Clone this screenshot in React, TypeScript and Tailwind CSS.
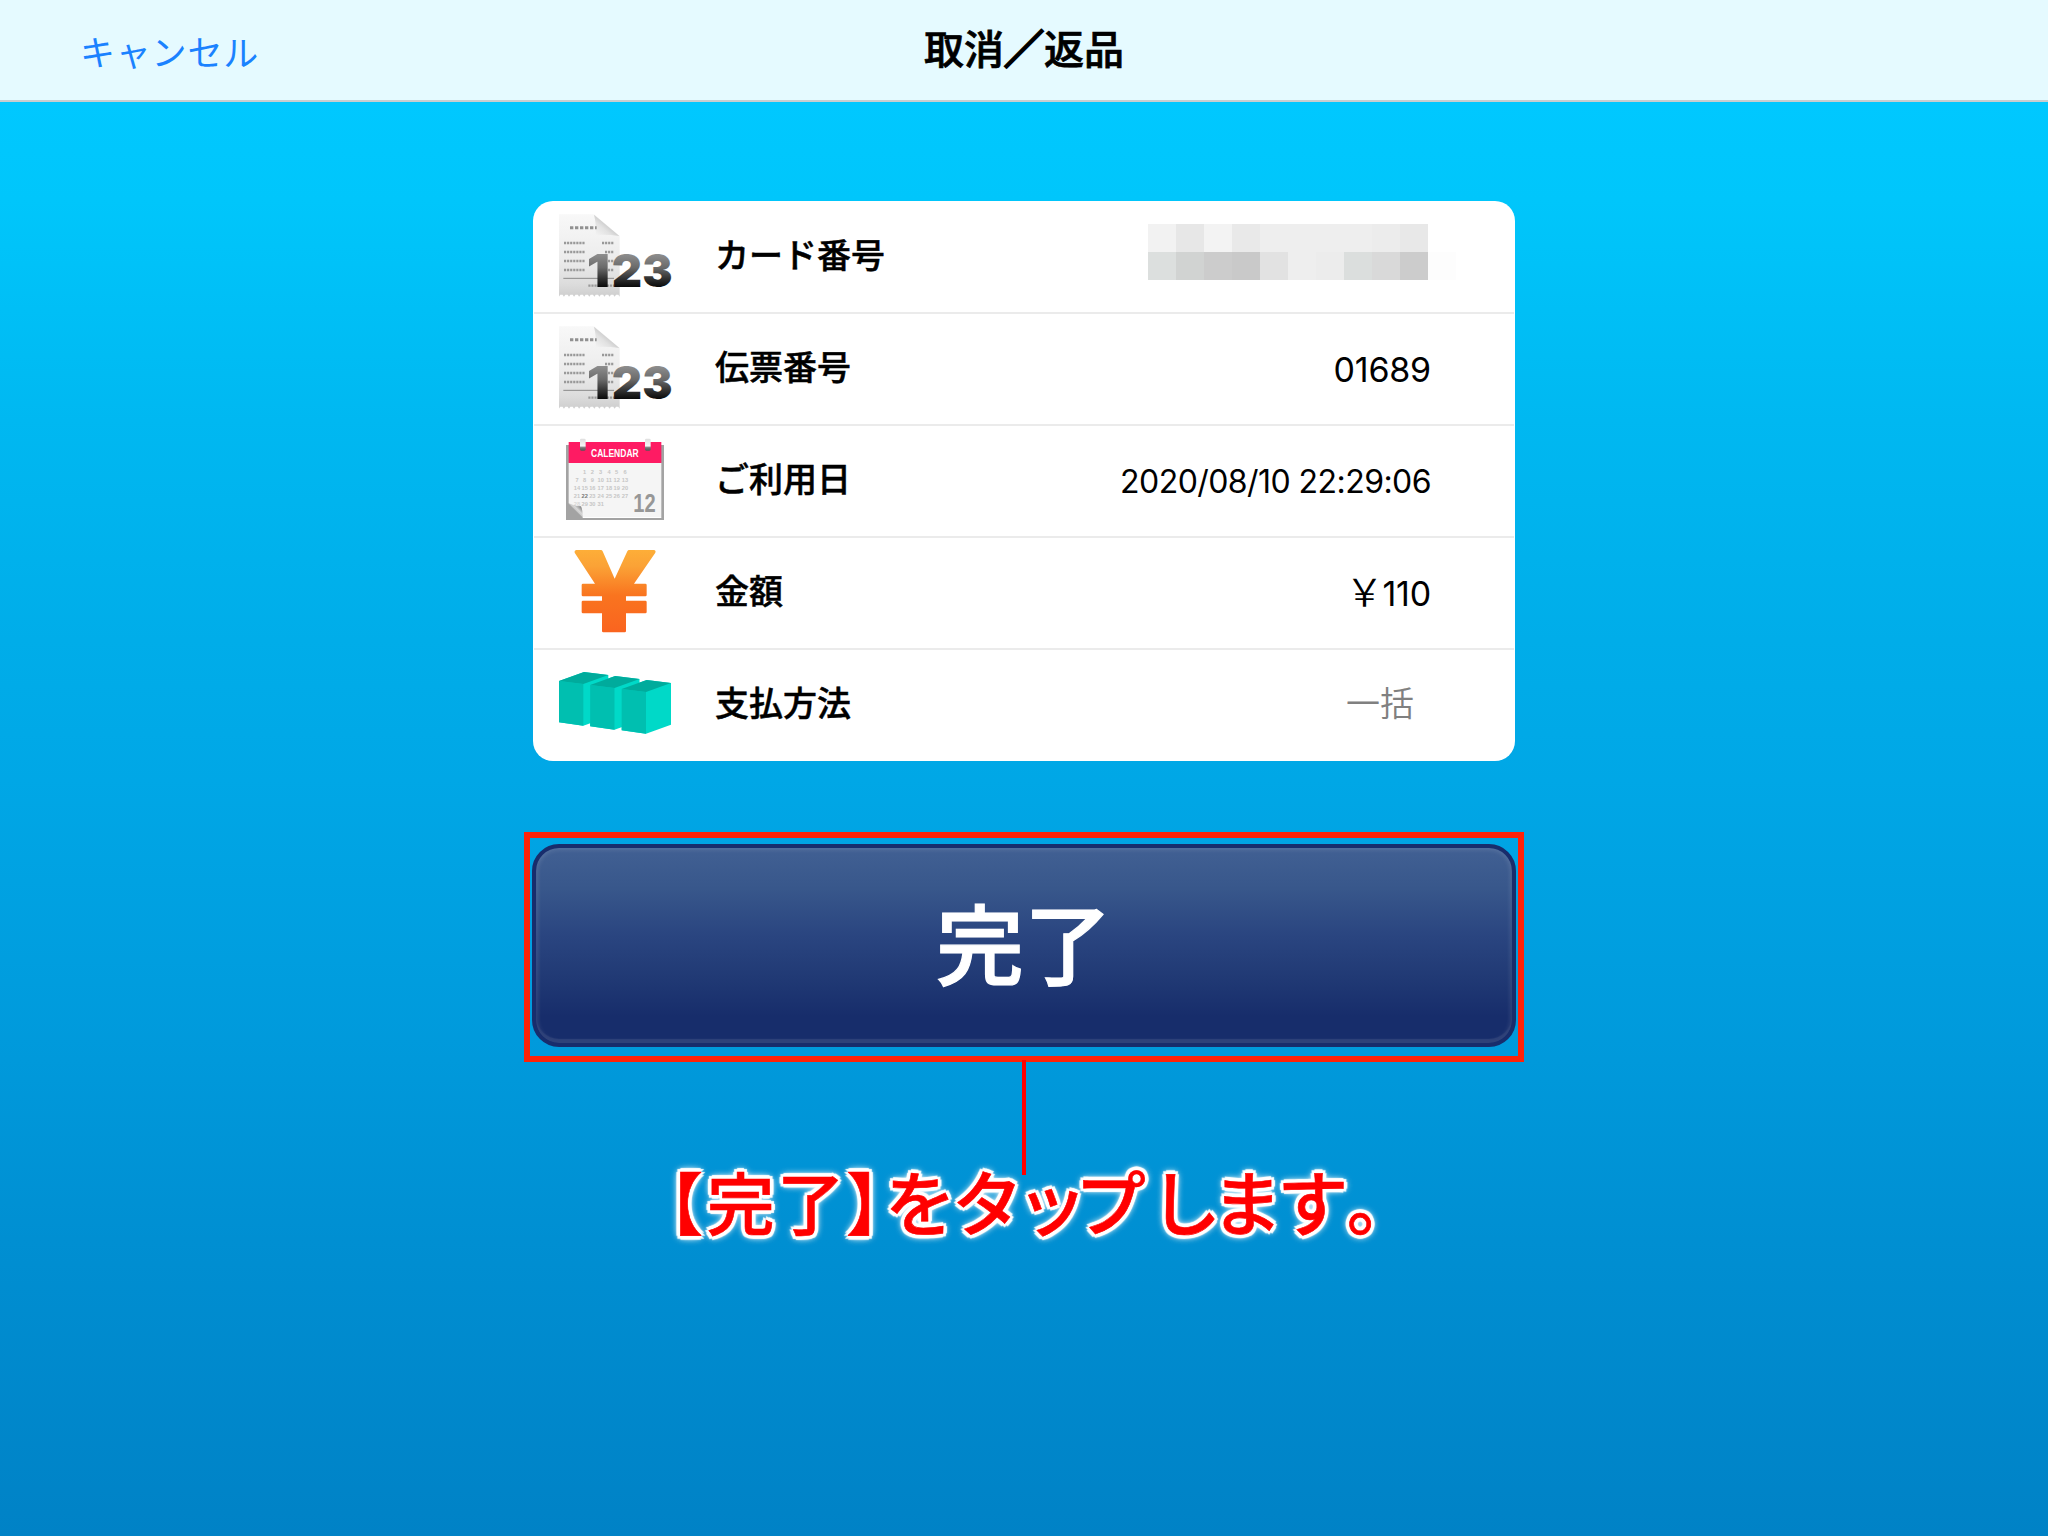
import type { ReactNode } from "react";

const JP = "font-['Noto_Sans_CJK_JP',sans-serif]";
const NUM = "font-['Inter','Noto_Sans_CJK_JP',sans-serif]";

const iconClass = "block h-[110px] w-[150px] shrink-0";

function ReceiptIcon({ id }: { id: string }) {
  const teeth = Array.from({ length: 12 }, (_, i) => {
    const x = 299 - i * 15.2;
    return `L${x} 320 L${x - 4} 314 L${x - 11} 314 L${x - 15.2} 320`;
  }).join(" ");
  return (
    <svg viewBox="39 36 450 330" className={iconClass}>
      <defs>
        <linearGradient id={`${id}-paper`} x1="0" y1="0" x2="0" y2="1">
          <stop offset="0" stopColor="#f8f8f8" />
          <stop offset="0.55" stopColor="#ececec" />
          <stop offset="0.85" stopColor="#dcdcdc" />
          <stop offset="1" stopColor="#cecece" />
        </linearGradient>
        <linearGradient id={`${id}-fold`} x1="0" y1="1" x2="0.6" y2="0.4">
          <stop offset="0" stopColor="#f6f6f6" />
          <stop offset="0.6" stopColor="#e2e2e2" />
          <stop offset="1" stopColor="#c4c4c4" />
        </linearGradient>
        <linearGradient id={`${id}-num`} gradientUnits="userSpaceOnUse" x1="0" y1="190" x2="0" y2="292">
          <stop offset="0" stopColor="#909090" />
          <stop offset="0.42" stopColor="#6a6a6a" />
          <stop offset="0.75" stopColor="#303030" />
          <stop offset="1" stopColor="#080808" />
        </linearGradient>
      </defs>
      <path d={`M117 73 H222 L299 138 V320 ${teeth} L117 320Z`} fill={`url(#${id}-paper)`} />
      <path d="M222 74 L298 138 Q258 132 227 135 Q229 100 222 74Z" fill={`url(#${id}-fold)`} />
      <g stroke="#999" strokeWidth="7" strokeDasharray="6.5 2.7">
        <path d="M132 159H196M246 159H282" />
        <path d="M132 186H196M255 186H282" />
        <path d="M132 213H196M264 213H282" />
        <path d="M132 240H196M264 240H282" />
        <path d="M205 287H282" />
      </g>
      <path d="M150 113H230" stroke="#919191" strokeWidth="9" strokeDasharray="10 5" />
      <path d="M130 265H282" stroke="#8a8a8a" strokeWidth="3" />
      <text y="291" fontFamily="Inter, sans-serif" fontWeight="900" fontSize="138" fill={`url(#${id}-num)`}>
        <tspan x="200" textLength="70" lengthAdjust="spacingAndGlyphs">1</tspan>
        <tspan x="275" textLength="91" lengthAdjust="spacingAndGlyphs">2</tspan>
        <tspan x="367" textLength="91" lengthAdjust="spacingAndGlyphs">3</tspan>
      </text>
    </svg>
  );
}

const weeks = [
  ["", "1", "2", "3", "4", "5", "6"],
  ["7", "8", "9", "10", "11", "12", "13"],
  ["14", "15", "16", "17", "18", "19", "20"],
  ["21", "22", "23", "24", "25", "26", "27"],
  ["28", "29", "30", "31"],
];
const dayX = [171, 194, 217, 242, 267, 290, 315];

function CalendarIcon() {
  return (
    <svg viewBox="39 18 450 330" className={iconClass} fontFamily="Liberation Sans, Arial, sans-serif">
      <defs>
        <linearGradient id="ring" x1="0" y1="0" x2="0" y2="1">
          <stop offset="0" stopColor="#dedede" />
          <stop offset="0.6" stopColor="#f6f6f6" />
          <stop offset="0.75" stopColor="#777" />
          <stop offset="1" stopColor="#555" />
        </linearGradient>
        <linearGradient id="curl" x1="0" y1="1" x2="0.8" y2="0.2">
          <stop offset="0.35" stopColor="#9b9b9b" />
          <stop offset="0.75" stopColor="#d8d8d8" />
          <stop offset="1" stopColor="#888" />
        </linearGradient>
      </defs>
      <rect x="138" y="75" width="294" height="225" fill="#a3a3a3" />
      <path d="M146 128H424V291H188L146 250Z" fill="#f5f5f5" />
      <path d="M188 292.500H424" stroke="#fff" strokeWidth="3" />
      <rect x="146" y="66" width="278" height="63" fill="#fe1b63" />
      <path d="M146 250L188 292Q189 272 183 259Q166 259 146 250Z" fill="url(#curl)" />
      <rect x="180" y="56" width="17" height="36" rx="4" fill="url(#ring)" />
      <rect x="375" y="56" width="17" height="36" rx="4" fill="url(#ring)" />
      <text x="213" y="112" fontSize="35" fontWeight="700" fill="#fff" textLength="143" lengthAdjust="spacingAndGlyphs">
        CALENDAR
      </text>
      <g fontSize="17" fontWeight="700" textAnchor="middle">
        {weeks.map((week, r) =>
          week.map((day, c) => (
            <text
              key={`${r}-${c}`}
              x={dayX[c]}
              y={162.500 + r * 24}
              fill={day === "22" ? "#777" : "#c6c6c6"}
              opacity={day === "28" ? 0.6 : 1}
            >
              {day}
            </text>
          )),
        )}
      </g>
      <text x="340" y="275" fontSize="75" fontWeight="700" fill="#979797" textLength="67" lengthAdjust="spacingAndGlyphs">
        12
      </text>
    </svg>
  );
}

function YenIcon() {
  return (
    <svg viewBox="39 354 450 330" className={iconClass}>
      <defs>
        <linearGradient id="yen" gradientUnits="userSpaceOnUse" x1="0" y1="390" x2="0" y2="637">
          <stop offset="0" stopColor="#fdae38" />
          <stop offset="0.2" stopColor="#fba236" />
          <stop offset="0.55" stopColor="#f9741f" />
          <stop offset="1" stopColor="#fa641f" />
        </linearGradient>
      </defs>
      <path
        d="M168 390H243Q246 390 248 394L284 476L322 394Q324 390 327 390H403Q409 392 406 398L342 491H376Q380 491 380 495V525Q380 529 376 529H318V542H376Q380 542 380 546V576Q380 580 376 580H318V633Q318 637 314 637H250Q246 637 246 633V580H189Q185 580 185 576V546Q185 542 189 542H246V529H189Q185 529 185 525V495Q185 491 189 491H225L164 398Q162 392 168 390Z"
        fill="url(#yen)"
      />
    </svg>
  );
}

function BoxesIcon() {
  return (
    <svg viewBox="39 60 450 330" className={iconClass}>
      {[
        [0, 0],
        [93.500, 12],
        [188, 24],
      ].map(([x, y]) => (
        <g key={x} transform={`translate(${x} ${y})`}>
          <path d="M117 153L192 126L265 135V260L190 287L117 277Z" fill="#00d9c8" />
          <path d="M117 153L190 162V287L117 277Z" fill="#00bfb0" />
          <path d="M117 153L192 126L265 135L190 162Z" fill="#00ab9c" />
        </g>
      ))}
    </svg>
  );
}

const mosaic = [
  ["#f2f2f2", "#e7e7e7", "#f3f3f3", "#e9e9e9", "#eeeeee", "#eeeeee", "#eeeeee", "#eeeeee", "#ececec", "#e8e8e8", "#ffffff"],
  ["#dcdfde", "#d1d3d2", "#cccccc", "#c9c9c9", "#e2e2e2", "#eeeeee", "#ececec", "#dbdedd", "#d9d9d9", "#cccccc", "#fdfdfd"],
];

function MaskedNumber() {
  return (
    <div className="mr-[59px] grid grid-cols-[repeat(11,28px)] self-start pt-[22px]">
      {mosaic.flat().map((color, i) => (
        <div key={i} className="h-7 w-7" style={{ backgroundColor: color }} />
      ))}
    </div>
  );
}

function Row({ icon, label, last, children }: { icon: ReactNode; label: string; last?: boolean; children: ReactNode }) {
  return (
    <div className={last ? "mx-px" : "mx-px border-b-2 border-[#ebebeb]"}>
      <div className="-mx-px flex h-[110px] items-center">
        {icon}
        <div
          className={`${JP} ml-8 flex-1 pb-[7px] text-[34px] leading-[50px] font-medium whitespace-nowrap text-black [-webkit-text-stroke:0.5px_#000]`}
        >
          {label}
        </div>
        {children}
      </div>
    </div>
  );
}

/* Each character with the extra space (px) that follows it. */
const callout: [string, number][] = [
  ["【", 5],
  ["完", 2],
  ["了", 3],
  ["】", 4],
  ["を", 4],
  ["タ", 7],
  ["ッ", -1],
  ["プ", 11],
  ["し", -2],
  ["ま", 2],
  ["す", 1],
  ["。", 0],
];

export default function App() {
  return (
    <div className="flex h-[1536px] w-[2048px] flex-col overflow-hidden">
      <header className="grid h-[102px] shrink-0 grid-cols-3 items-center border-b-2 border-[#c9cdcf] bg-[#e5faff]">
        <button
          className={`${JP} ml-20 justify-self-start pt-[2px] text-[35px] leading-[50px] font-normal tracking-[0.8px] whitespace-nowrap text-[#1a82ff]`}
        >
          キャンセル
        </button>
        <h1
          className={`${JP} justify-self-center pb-[7px] text-[40px] leading-[58px] font-medium whitespace-nowrap text-black [-webkit-text-stroke:0.7px_#000]`}
        >
          取消<span className="[-webkit-text-stroke:2.5px_#000]">／</span>返品
        </h1>
      </header>

      <main className="flex flex-1 flex-col items-center bg-[linear-gradient(180deg,#00c8ff_0px,#00c6fb_98px,#00b8f1_318px,#00ade9_538px,#00a7e6_678px,#0099db_958px,#008fd2_1138px,#0082c6_1434px)] pt-[99px]">
        <section className="flex h-[560px] w-[982px] shrink-0 flex-col rounded-[20px] bg-white pt-px">
          <Row icon={<ReceiptIcon id="card" />} label="カード番号">
            <MaskedNumber />
          </Row>
          <Row icon={<ReceiptIcon id="slip" />} label="伝票番号">
            <div className={`${NUM} mr-[84px] pt-px text-[34px] leading-[42px] tracking-[-0.2px] text-black`}>01689</div>
          </Row>
          <Row icon={<CalendarIcon />} label="ご利用日">
            <div className={`${NUM} mr-[84px] pt-[2px] text-[32px] leading-[42px] tracking-[-0.56px] text-black`}>2020/08/10 22:29:06</div>
          </Row>
          <Row icon={<YenIcon />} label="金額">
            <div className="mr-[84px] flex items-baseline pb-[3px] leading-[42px] text-black">
              <span className={`${JP} mr-[-1px] text-[38px] font-[350]`}>￥</span>
              <span className={`${NUM} text-[34px] tracking-[-0.2px]`}>110</span>
            </div>
          </Row>
          <Row icon={<BoxesIcon />} label="支払方法" last>
            <div className={`${JP} mr-[101px] pb-[6px] text-[34px] leading-[50px] font-[350] text-[#808080]`}>一括</div>
          </Row>
        </section>

        <div className="mt-[71px] h-[230px] w-[1000px] shrink-0 border-[6px] border-[#ff2208] pt-[6px] pl-[2px]">
          <button className="flex h-[203px] w-[984px] items-center justify-center rounded-[27px] border-4 border-[#182d6c] bg-[linear-gradient(180deg,#426194_0%,#38578b_22%,#2a4580_45%,#213a75_65%,#172d6b_85%,#172d6b_100%)] bg-origin-border shadow-[inset_0_-4px_1px_#2f4279,inset_0_0_4px_2px_#ffffff1c]">
            <span className={`${JP} pb-[12px] text-[88px] leading-[120px] font-medium text-white [-webkit-text-stroke:1.2px_#fff]`}>完了</span>
          </button>
        </div>
        <div className="mt-[-2px] h-[115px] w-1 shrink-0 bg-[#ff0000]" />
        <p
          className={`${JP} relative mt-[-26px] text-[68px] leading-[100px] font-medium whitespace-nowrap text-[#ff0000] [-webkit-text-stroke:0.6px_#f00] [font-feature-settings:'palt'] [text-shadow:4px_0_1px_#fff,-4px_0_1px_#fff,0_4px_1px_#fff,0_-4px_1px_#fff,3px_3px_1px_#fff,-3px_3px_1px_#fff,3px_-3px_1px_#fff,-3px_-3px_1px_#fff,0_0_7px_#fff,0_0_10px_#fff,0_0_10px_#fff]`}
        >
          {callout.map(([char, gap], i) => (
            <span key={i} className={i > 3 && i < 11 ? "text-[71px]" : ""} style={{ marginRight: gap }}>
              {char}
            </span>
          ))}
        </p>
      </main>
    </div>
  );
}
